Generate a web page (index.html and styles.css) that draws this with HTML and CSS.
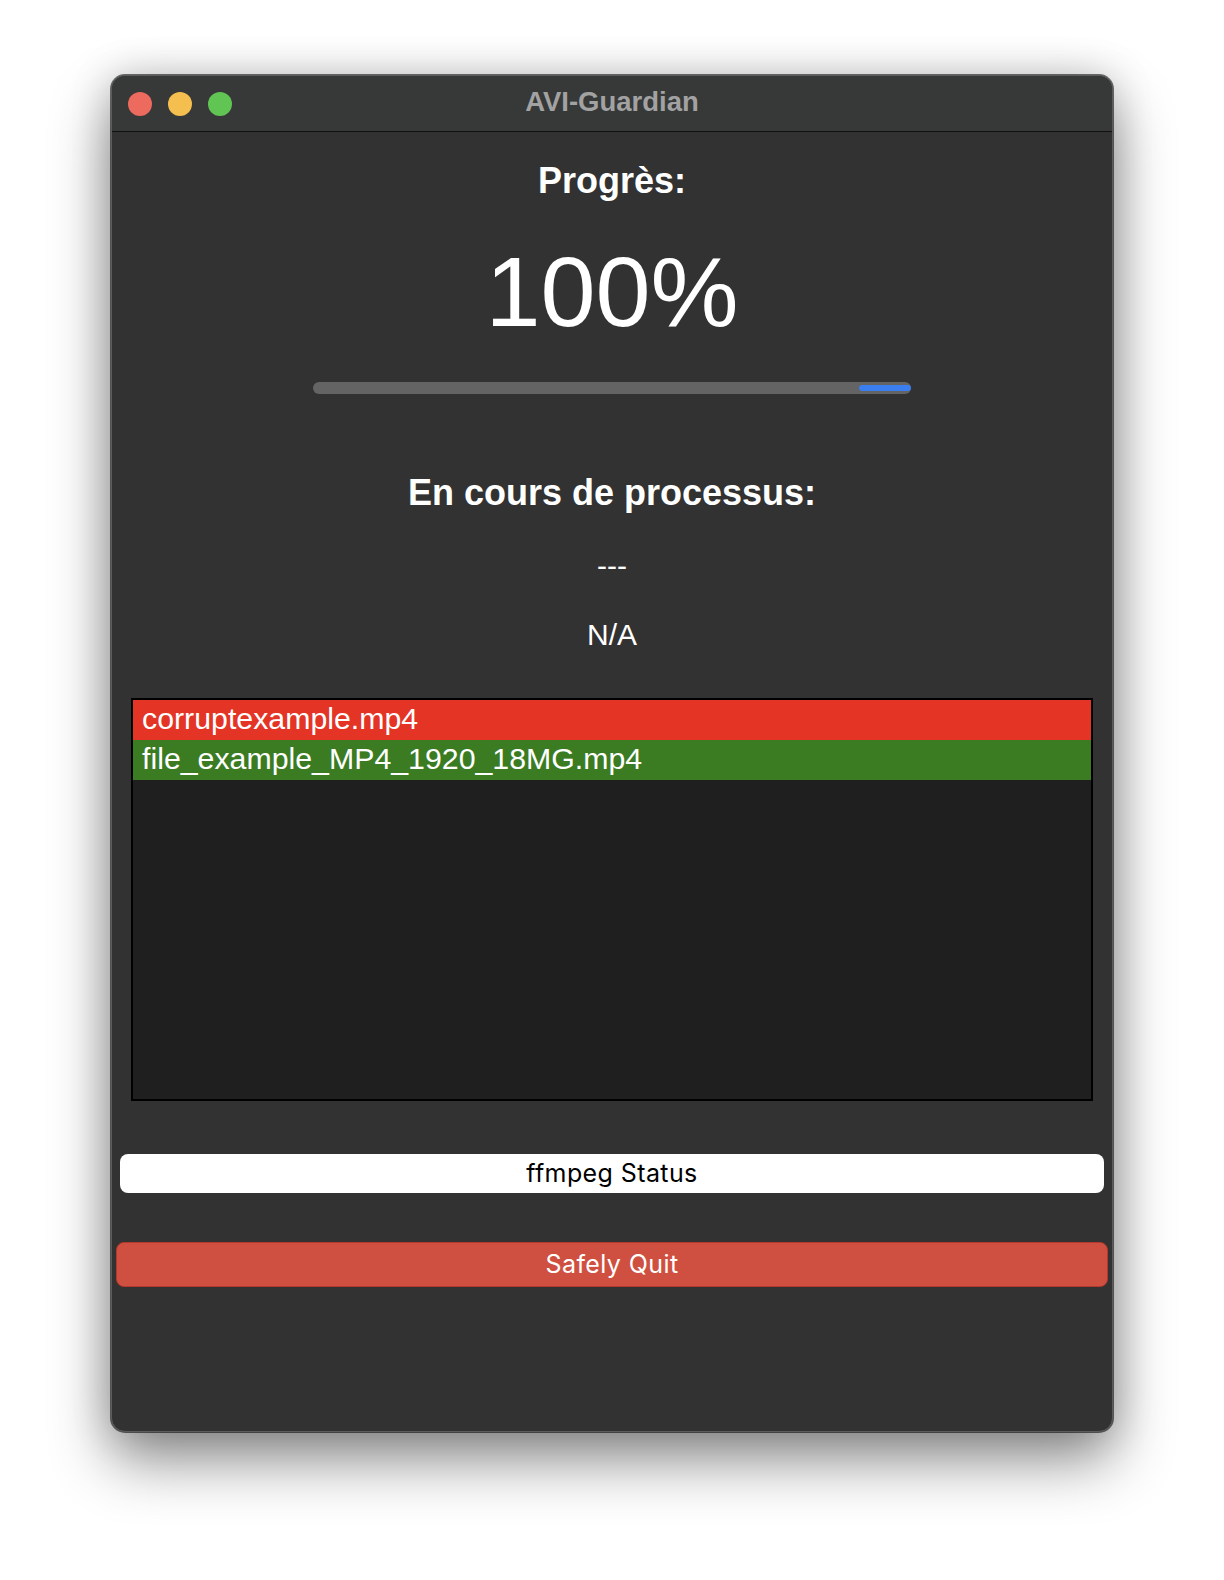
FILE: index.html
```html
<!DOCTYPE html>
<html lang="fr">
<head>
<meta charset="utf-8">
<title>AVI-Guardian</title>
<link rel="stylesheet" href="styles.css">
</head>
<body>
<div class="page">
  <div class="window">
    <div class="titlebar">
      <div class="lights">
        <span class="light red"></span>
        <span class="light yellow"></span>
        <span class="light green"></span>
      </div>
      <div class="title">AVI-Guardian</div>
      <div class="spacer"></div>
    </div>
    <div class="content">
      <div class="heading progress-heading">Progrès:</div>
      <div class="percent">100%</div>
      <div class="track"><div class="fill"></div></div>
      <div class="heading process-heading">En cours de processus:</div>
      <div class="value dashes">---</div>
      <div class="value na">N/A</div>
      <div class="listbox">
        <div class="row bad">corruptexample.mp4</div>
        <div class="row good">file_example_MP4_1920_18MG.mp4</div>
      </div>
      <div class="btn status-btn">ffmpeg Status</div>
      <div class="btn quit-btn">Safely Quit</div>
    </div>
  </div>
</div>
</body>
</html>
```

FILE: styles.css
```css
html, body {
  margin: 0;
  padding: 0;
  background: #ffffff;
}

.page {
  width: 1224px;
  height: 1580px;
  padding: 75px 0 0 111px;
  box-sizing: border-box;
}

.window {
  width: 1002px;
  height: 1357px;
  box-sizing: border-box;
  border: 1px solid #5c5c5c;
  border-radius: 14px;
  background: #323232;
  overflow: hidden;
  box-shadow: 0 0 0 1px rgba(0, 0, 0, 0.55),
              0 28px 60px rgba(0, 0, 0, 0.45),
              0 0 40px rgba(0, 0, 0, 0.18);
  display: flex;
  flex-direction: column;
}

.titlebar {
  height: 55px;
  flex: none;
  background: #373838;
  border-bottom: 1px solid #111111;
  display: grid;
  grid-template-columns: 1fr auto 1fr;
  align-items: center;
}

.lights {
  display: flex;
  gap: 16px;
  padding-left: 16px;
}

.light {
  width: 24px;
  height: 24px;
  border-radius: 50%;
  display: block;
}
.light.red { background: #ec6a5e; }
.light.yellow { background: #f4bf4f; }
.light.green { background: #61c554; }

.title {
  font-family: "Liberation Sans", Arial, sans-serif;
  font-weight: 700;
  font-size: 27.5px;
  color: #a2a2a2;
  line-height: 30px;
  padding-bottom: 4px;
}

.content {
  display: flex;
  flex-direction: column;
  align-items: center;
  font-family: "Liberation Sans", Arial, sans-serif;
  color: #ffffff;
}

.heading {
  font-weight: 700;
  font-size: 36px;
  line-height: 40px;
}

.progress-heading {
  margin-top: 29px;
}

.percent {
  font-size: 99px;
  line-height: 100px;
  margin-top: 41px;
}

.track {
  margin-top: 40px;
  width: 598px;
  height: 12px;
  border-radius: 6px;
  background: #646464;
  display: flex;
  justify-content: flex-end;
  align-items: center;
}

.fill {
  width: 52px;
  height: 6px;
  border-radius: 3px;
  background: #3b7ef0;
}

.process-heading {
  margin-top: 79px;
}

.value {
  font-size: 30px;
  line-height: 34px;
}

.dashes {
  margin-top: 36px;
}

.na {
  margin-top: 35px;
}

.listbox {
  margin-top: 46px;
  width: 962px;
  height: 403px;
  box-sizing: border-box;
  border: 2px solid #000000;
  background: #1f1f1f;
  display: flex;
  flex-direction: column;
}

.row {
  height: 40px;
  box-sizing: border-box;
  padding: 1px 0 3px 9px;
  font-size: 30.3px;
  line-height: 36px;
  color: #ffffff;
}
.row.bad { background: #e43426; }
.row.good { background: #3b7c23; }

.btn {
  box-sizing: border-box;
  border-radius: 8px;
  font-family: "Inter", "Liberation Sans", sans-serif;
  font-size: 25px;
  letter-spacing: 0.4px;
  text-align: center;
}

.status-btn {
  margin-top: 53px;
  width: 984px;
  height: 39px;
  line-height: 39px;
  background: #ffffff;
  color: #000000;
}

.quit-btn {
  margin-top: 49px;
  width: 992px;
  height: 45px;
  line-height: 42px;
  background: #cf5040;
  border: 1.5px solid #b2392b;
  color: #ffffff;
}
```
